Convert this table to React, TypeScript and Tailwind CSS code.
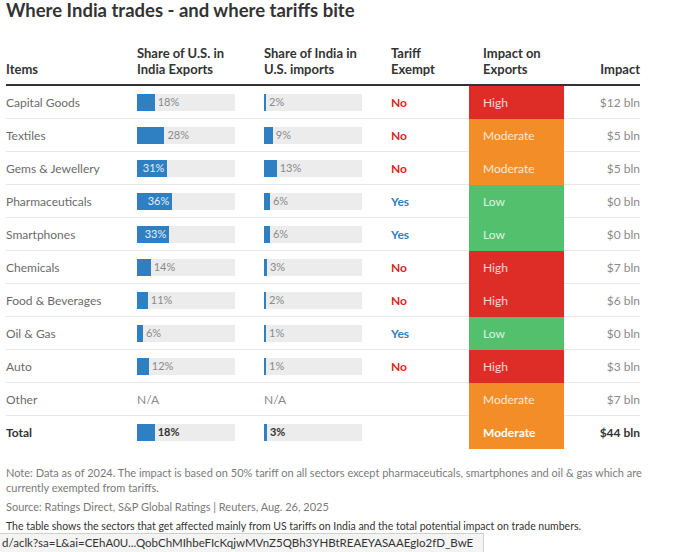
import React from "react";

type Impact = "High" | "Moderate" | "Low";

type Row = {
  item: string;
  usShare: number | null;
  indiaShare: number | null;
  exempt: boolean | null;
  impact: Impact;
  amount: string;
};

const rows: Row[] = [
  { item: "Capital Goods", usShare: 18, indiaShare: 2, exempt: false, impact: "High", amount: "$12 bln" },
  { item: "Textiles", usShare: 28, indiaShare: 9, exempt: false, impact: "Moderate", amount: "$5 bln" },
  { item: "Gems & Jewellery", usShare: 31, indiaShare: 13, exempt: false, impact: "Moderate", amount: "$5 bln" },
  { item: "Pharmaceuticals", usShare: 36, indiaShare: 6, exempt: true, impact: "Low", amount: "$0 bln" },
  { item: "Smartphones", usShare: 33, indiaShare: 6, exempt: true, impact: "Low", amount: "$0 bln" },
  { item: "Chemicals", usShare: 14, indiaShare: 3, exempt: false, impact: "High", amount: "$7 bln" },
  { item: "Food & Beverages", usShare: 11, indiaShare: 2, exempt: false, impact: "High", amount: "$6 bln" },
  { item: "Oil & Gas", usShare: 6, indiaShare: 1, exempt: true, impact: "Low", amount: "$0 bln" },
  { item: "Auto", usShare: 12, indiaShare: 1, exempt: false, impact: "High", amount: "$3 bln" },
  { item: "Other", usShare: null, indiaShare: null, exempt: null, impact: "Moderate", amount: "$7 bln" },
];

const impactBg: Record<Impact, string> = {
  High: "bg-[#de2d26]",
  Moderate: "bg-[#f38d27]",
  Low: "bg-[#52c06c]",
};

const cols = "grid grid-cols-[131px_127px_127px_78px_95px_76px]";

function ShareBar({ value, bold }: { value: number | null; bold?: boolean }) {
  if (value === null) {
    return <span className="text-[12px] text-[#8a8a8a]">N/A</span>;
  }
  const inside = value >= 30;
  const fill = Math.max(2, (value / 100) * 98);
  return (
    <div className="flex h-[17px] w-[98px] items-center bg-[#ececec]">
      <div
        className="flex h-full items-center justify-end bg-[#2f80c2]"
        style={{ width: fill }}
      >
        {inside ? (
          <span className="pr-[3px] text-[11px] text-[#e4eef8]">{value}%</span>
        ) : null}
      </div>
      {!inside ? (
        <span
          className={`ml-[3px] text-[11px] ${
            bold ? "font-bold text-[#333]" : "text-[#8a8a8a]"
          }`}
        >
          {value}%
        </span>
      ) : null}
    </div>
  );
}

function TableRow({ row, total }: { row: Row; total?: boolean }) {
  return (
    <div
      className={`${cols} h-[33px] items-center ${
        total ? "" : "border-b border-[#e8e8e8]"
      }`}
    >
      <span
        className={`text-[12px] ${
          total ? "font-bold text-[#333]" : "text-[#6b6b6b]"
        }`}
      >
        {row.item}
      </span>
      <ShareBar value={row.usShare} bold={total} />
      <ShareBar value={row.indiaShare} bold={total} />
      <span
        className={`text-[12px] font-bold ${
          row.exempt ? "text-[#2f7fc1]" : "text-[#d9261c]"
        }`}
      >
        {row.exempt === null ? "" : row.exempt ? "Yes" : "No"}
      </span>
      <div
        className={`flex h-[33px] items-center pl-[14px] text-[12px] ${impactBg[row.impact]} ${
          total ? "font-bold text-white" : "text-white/80"
        }`}
      >
        {row.impact}
      </div>
      <span
        className={`text-right text-[12px] ${
          total ? "font-bold text-[#333]" : "text-[#8a8a8a]"
        }`}
      >
        {row.amount}
      </span>
    </div>
  );
}

export default function App() {
  const total: Row = {
    item: "Total",
    usShare: 18,
    indiaShare: 3,
    exempt: null,
    impact: "Moderate",
    amount: "$44 bln",
  };

  return (
    <div className="relative h-[552px] w-[676px] overflow-hidden bg-white font-['Lato',sans-serif]">
      <div className="pl-[6px]">
        <div className="w-[634px]">
          <h1 className="text-[18.5px] font-bold leading-[21px] text-[#333]">
            Where India trades - and where tariffs bite
          </h1>

          <div
            className={`${cols} mt-[24px] items-end border-b-2 border-[#333] pb-[7px] text-[13px] font-bold leading-[16px] text-[#333]`}
          >
            <span>Items</span>
            <span>
              Share of U.S. in
              <br />
              India Exports
            </span>
            <span>
              Share of India in
              <br />
              U.S. imports
            </span>
            <span>
              Tariff
              <br />
              Exempt
            </span>
            <span className="pl-[14px]">
              Impact on
              <br />
              Exports
            </span>
            <span className="text-right">Impact</span>
          </div>

          {rows.map((row) => (
            <TableRow key={row.item} row={row} />
          ))}
          <TableRow row={total} total />
        </div>

        <div className="w-[650px]">
          <p className="mt-[16px] text-[11px] leading-[15px] text-[#7a7a7a]">
            Note: Data as of 2024. The impact is based on 50% tariff on all sectors except
            pharmaceuticals, smartphones and oil &amp; gas which are currently exempted from
            tariffs.
          </p>
          <p className="mt-[4px] text-[11px] leading-[15px] text-[#7a7a7a]">
            Source: Ratings Direct, S&amp;P Global Ratings | Reuters, Aug. 26, 2025
          </p>
          <p className="mt-[5px] text-[10.5px] leading-[14px] text-[#333]">
            The table shows the sectors that get affected mainly from US tariffs on India and
            the total potential impact on trade numbers.
          </p>
        </div>
      </div>

      <div className="absolute bottom-0 left-0 h-[19px] w-[484px] whitespace-nowrap border-t border-r border-[#d0d0d0] bg-[#f4f4f4] pl-[2px] text-[11.5px] leading-[18px] text-[#333]">
        d/aclk?sa=L&amp;ai=CEhA0U...QobChMIhbeFIcKqjwMVnZ5QBh3YHBtREAEYASAAEgIo2fD_BwE
      </div>
    </div>
  );
}
